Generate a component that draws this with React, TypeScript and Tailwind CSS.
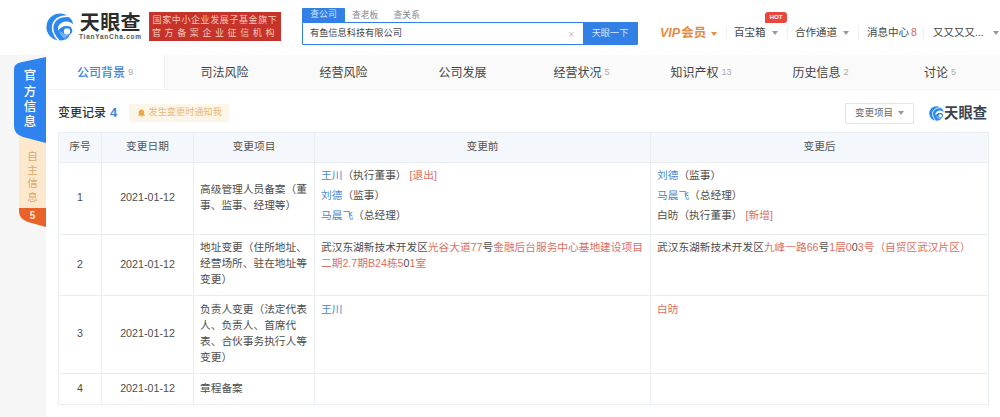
import React from "react";

function Logo({ size = 32 }: { size?: number }) {
  return (
    <svg width={size} height={size} viewBox="0 0 32 32" className="shrink-0">
      <circle cx="16" cy="16" r="15.500" fill="#2b88ec" />
      <path d="M31 5C23 2 13 4 9 11 6 17 8 25 15 32" fill="none" stroke="#ffffff" strokeWidth="2" />
      <path d="M33 15c-3-5-10-7-15-4-4 2-5 6-4 9 2-3 5-5 8-5 4-.5 6 .5 7 2 2 3 1 6-2 8l-2 4 10 1Z" fill="#ffffff" />
      <circle cx="24" cy="21" r="3.600" fill="#ffffff" />
      <path d="M15 20c3 2 7 5 11 6-2 1-3 2-5 3-3-2-5-5-6-9Z" fill="#ffffff" opacity="0.35" />
      <path d="M17 19c0-2 2-3 4-3.500 3-.5 5 .5 6 1.500-3-1-6-.5-8 1-1 .5-1.500 1-2 1Z" fill="#2b88ec" />
    </svg>
  );
}

function Caret({ color = "border-t-[#999999]" }: { color?: string }) {
  return <span className={`inline-block w-0 h-0 border-x-[3.500px] border-x-transparent border-t-[4px] ${color}`} />;
}

function Divider() {
  return <span className="w-px h-3 bg-[#eeeeee] shrink-0" />;
}

const Blue = ({ children }: { children: React.ReactNode }) => <span className="text-[#4a86c8]">{children}</span>;
const Red = ({ children }: { children: React.ReactNode }) => <span className="text-[#d9705f]">{children}</span>;

function Person({ name, role, tag, plain }: { name: string; role: string; tag?: string; plain?: boolean }) {
  return (
    <div className="h-5 leading-5 whitespace-nowrap">
      {plain ? <span>{name}</span> : <Blue>{name}</Blue>}
      <span>（{role}）</span>
      {tag ? <Red> [{tag}]</Red> : null}
    </div>
  );
}

const tabs: [string, string, string][] = [
  ["公司背景", "9", "w-[119px]"],
  ["司法风险", "", "w-[119px]"],
  ["经营风险", "", "w-[119px]"],
  ["公司发展", "", "w-[119px]"],
  ["经营状况", "5", "w-[119px]"],
  ["知识产权", "13", "w-[120px]"],
  ["历史信息", "2", "w-[119px]"],
  ["讨论", "5", "w-[120px]"],
];

const td = "border border-[#e8eef2] align-middle text-center pb-[3px]";
const tdl = "border border-[#e8eef2] px-[6px] text-left";

export default function App() {
  return (
    <div className="w-[1000px] h-[417px] overflow-hidden bg-white text-[#333333] font-['Liberation_Sans','Noto_Sans_CJK_SC',sans-serif]">
      <header className="h-[55px] flex items-start bg-white relative">
        <div className="ml-[46px] mt-[13px] flex items-center gap-[5px] w-[97px]">
          <Logo size={28} />
          <div className="flex flex-col items-center">
            <span className="text-[20px] leading-[20px] font-bold tracking-[0.4px] text-[#2c2c2c]">天眼查</span>
            <span className="text-[6.500px] leading-[8px] font-bold tracking-[0.75px] text-[#555555] whitespace-nowrap">TianYanCha.com</span>
          </div>
        </div>
        <div className="ml-[6px] mt-[12px] w-[132px] h-[29px] bg-[#c5332b] text-[#f5c9b9] text-[9px] leading-[13px] flex flex-col justify-center items-center">
          <span className="tracking-[0.6px]">国家中小企业发展子基金旗下</span>
          <span className="tracking-[3.6px]">官方备案企业征信机构</span>
        </div>
        <div className="ml-[21px] mt-[8px] w-[336px]">
          <div className="flex items-end h-[14px] text-[8.800px] text-[#888888]">
            <span className="w-[43px] h-[14px] bg-[#3280e6] text-[#d5e6fb] flex items-center justify-center rounded-t-[1px]">查公司</span>
            <span className="ml-[7px] h-[14px] leading-[14px]">查老板</span>
            <span className="ml-[15px] h-[14px] leading-[14px]">查关系</span>
          </div>
          <div className="h-[23px] flex border border-[#3280e6] rounded-b-[1px] bg-white">
            <div className="flex-1 flex items-center justify-between pl-[7px] pr-[9px] pt-[1px] text-[9.200px] text-[#444444]">
              <span>有鱼信息科技有限公司</span>
              <span className="text-[#bbbbbb] text-[10px]">×</span>
            </div>
            <div className="w-[54px] bg-[#3280e6] text-[#d5e6fb] text-[9.200px] flex items-center justify-center pt-[1px]">天眼一下</div>
          </div>
        </div>
        <nav className="absolute left-[660px] top-[26px] flex items-center h-[14px] text-[10.500px] text-[#444444] whitespace-nowrap">
          <span className="flex items-center w-[66px] text-[#e58a43] font-bold text-[12.500px]">
            <span className="italic">VIP</span><span className="ml-[1px]">会员</span>
            <span className="ml-[5px] mt-[1px] flex"><Caret color="border-t-[#e58a43]" /></span>
          </span>
          <Divider />
          <span className="relative ml-[7px] flex items-center w-[53px]">
            百宝箱
            <span className="ml-[6px] flex"><Caret /></span>
            <span className="absolute left-[31px] -top-[13px] w-[22px] h-[11px] rounded-[3px] rounded-bl-none bg-[#e8483c] text-white text-[6px] leading-[11px] text-center font-bold">HOT</span>
          </span>
          <Divider />
          <span className="ml-[7px] flex items-center w-[63px]">
            合作通道
            <span className="ml-[6px] flex"><Caret /></span>
          </span>
          <Divider />
          <span className="ml-[8px] flex items-center w-[56px]">
            消息中心<span className="ml-[2px] text-[#d9654f]">8</span>
          </span>
          <Divider />
          <span className="ml-[9px] flex items-center">
            又又又又...
            <span className="ml-[9px] flex"><Caret /></span>
          </span>
        </nav>
      </header>

      <div className="flex h-[362px] bg-[#f6f6f6]">
        <aside className="w-[46px] shrink-0 pt-[2px] flex flex-col items-end">
          <div className="relative z-10 w-[32px] h-[86px] bg-[#2f83ee] [clip-path:path('M0_12_Q0_7_6_5.500_L32_0_L32_86_L9_80_Q0_77_0_69_Z')] flex items-center justify-center">
            <span className="w-[13px] text-white text-[12.500px] leading-[15.300px] font-medium text-center">官方信息</span>
          </div>
          <div className="-mt-[8px] w-[27px] h-[92px] bg-[#fbe8cd] [clip-path:path('M0_0_L27_0_L27_92_L9_87_Q0_84_0_76_Z')] flex flex-col">
            <div className="h-[73px] flex justify-center pt-[15px]">
              <span className="w-[11px] text-[#d8a96a] text-[10.500px] leading-[13.500px] text-center">自主信息</span>
            </div>
            <div className="h-[19px] bg-[#e8622a] text-[#fde8d8] text-[10px] leading-[15px] font-bold text-center">5</div>
          </div>
        </aside>

        <main className="w-[954px] bg-white">
          <div className="h-[35px] flex items-center bg-[#fafafa] text-[12px] text-[#444444] border-b border-[#f3f3f3]">
            {tabs.map(([t, n, w], i) => (
              <div key={t} className={`${w} h-full flex items-center justify-center pt-[1px] whitespace-nowrap ${i === 0 ? "bg-white text-[#3d86dd] font-medium border-r border-[#f3f3f3]" : ""}`}>
                {t}
                {n ? <span className="ml-[3px] text-[9px] text-[#aaaaaa]">{n}</span> : null}
              </div>
            ))}
          </div>

          <div className="h-[42px] flex items-center pt-[4px] pl-[12px] pr-[13px]">
            <span className="text-[12px] font-medium text-[#333333]">变更记录</span>
            <span className="ml-[4px] text-[13px] font-bold text-[#3d86dd]">4</span>
            <span className="ml-[12px] w-[100px] h-[18px] bg-[#fdf5e8] flex items-center justify-center gap-[3px] text-[9.200px] text-[#e8b978]">
              <svg width="9" height="9" viewBox="0 0 10 10"><path d="M5 .5C3 .5 2 2 2 4v2L1 7.500h8L8 6V4C8 2 7 .5 5 .5ZM4 8.300h2a1 1 0 0 1-2 0Z" fill="#eda93f" /></svg>
              发生变更时通知我
            </span>
            <span className="ml-auto w-[69px] h-[21px] border border-[#e3e3e3] rounded-[1px] flex items-center justify-center gap-[5px] text-[9.500px] text-[#666666]">
              变更项目<Caret />
            </span>
            <span className="ml-[15px] flex items-center">
              <Logo size={15} />
              <span className="text-[14.300px] leading-none font-bold text-[#3b4450]">天眼查</span>
            </span>
          </div>

          <div className="pl-[12px]">
            <table className="w-[930px] table-fixed border-collapse text-[10.700px] leading-[16px] text-[#4d4d4d]">
              <colgroup>
                <col className="w-[43px]" />
                <col className="w-[92px]" />
                <col className="w-[121px]" />
                <col className="w-[336px]" />
                <col className="w-[338px]" />
              </colgroup>
              <thead>
                <tr className="h-[30px] bg-[#f4f8fc] text-[#555555]">
                  <th className={`${td} font-normal`}>序号</th>
                  <th className={`${td} font-normal`}>变更日期</th>
                  <th className={`${td} font-normal`}>变更项目</th>
                  <th className={`${td} font-normal`}>变更前</th>
                  <th className={`${td} font-normal`}>变更后</th>
                </tr>
              </thead>
              <tbody>
                <tr className="h-[72px]">
                  <td className={td}>1</td>
                  <td className={td}>2021-01-12</td>
                  <td className={`${tdl} align-middle pb-[3px]`}>高级管理人员备案（董事、监事、经理等）</td>
                  <td className={`${tdl} align-top pt-[2px]`}>
                    <Person name="王川" role="执行董事" tag="退出" />
                    <Person name="刘德" role="监事" />
                    <Person name="马晨飞" role="总经理" />
                  </td>
                  <td className={`${tdl} align-top pt-[2px]`}>
                    <Person name="刘德" role="监事" />
                    <Person name="马晨飞" role="总经理" />
                    <Person name="白昉" role="执行董事" tag="新增" plain />
                  </td>
                </tr>
                <tr className="h-[61px]">
                  <td className={td}>2</td>
                  <td className={td}>2021-01-12</td>
                  <td className={`${tdl} align-top pt-[4px]`}>地址变更（住所地址、经营场所、驻在地址等变更）</td>
                  <td className={`${tdl} align-top pt-[4px]`}>
                    <div className="whitespace-nowrap">武汉东湖新技术开发区<Red>光谷大道77</Red>号<Red>金融后台服务中心基地建设项目</Red></div>
                    <div className="whitespace-nowrap"><Red>二期2.7期B24栋5</Red>0<Red>1室</Red></div>
                  </td>
                  <td className={`${tdl} align-top pt-[4px]`}>
                    <div className="whitespace-nowrap">武汉东湖新技术开发区<Red>九峰一路66</Red>号<Red>1层0</Red>0<Red>3号（自贸区武汉片区）</Red></div>
                  </td>
                </tr>
                <tr className="h-[78px]">
                  <td className={td}>3</td>
                  <td className={td}>2021-01-12</td>
                  <td className={`${tdl} align-top pt-[5px]`}>负责人变更（法定代表人、负责人、首席代表、合伙事务执行人等变更）</td>
                  <td className={`${tdl} align-top pt-[5px]`}><Blue>王川</Blue></td>
                  <td className={`${tdl} align-top pt-[5px]`}><Red>白昉</Red></td>
                </tr>
                <tr className="h-[31px]">
                  <td className={td}>4</td>
                  <td className={td}>2021-01-12</td>
                  <td className={`${tdl} align-middle pb-[2px]`}>章程备案</td>
                  <td className={tdl}></td>
                  <td className={tdl}></td>
                </tr>
              </tbody>
            </table>
          </div>
        </main>
      </div>
    </div>
  );
}
